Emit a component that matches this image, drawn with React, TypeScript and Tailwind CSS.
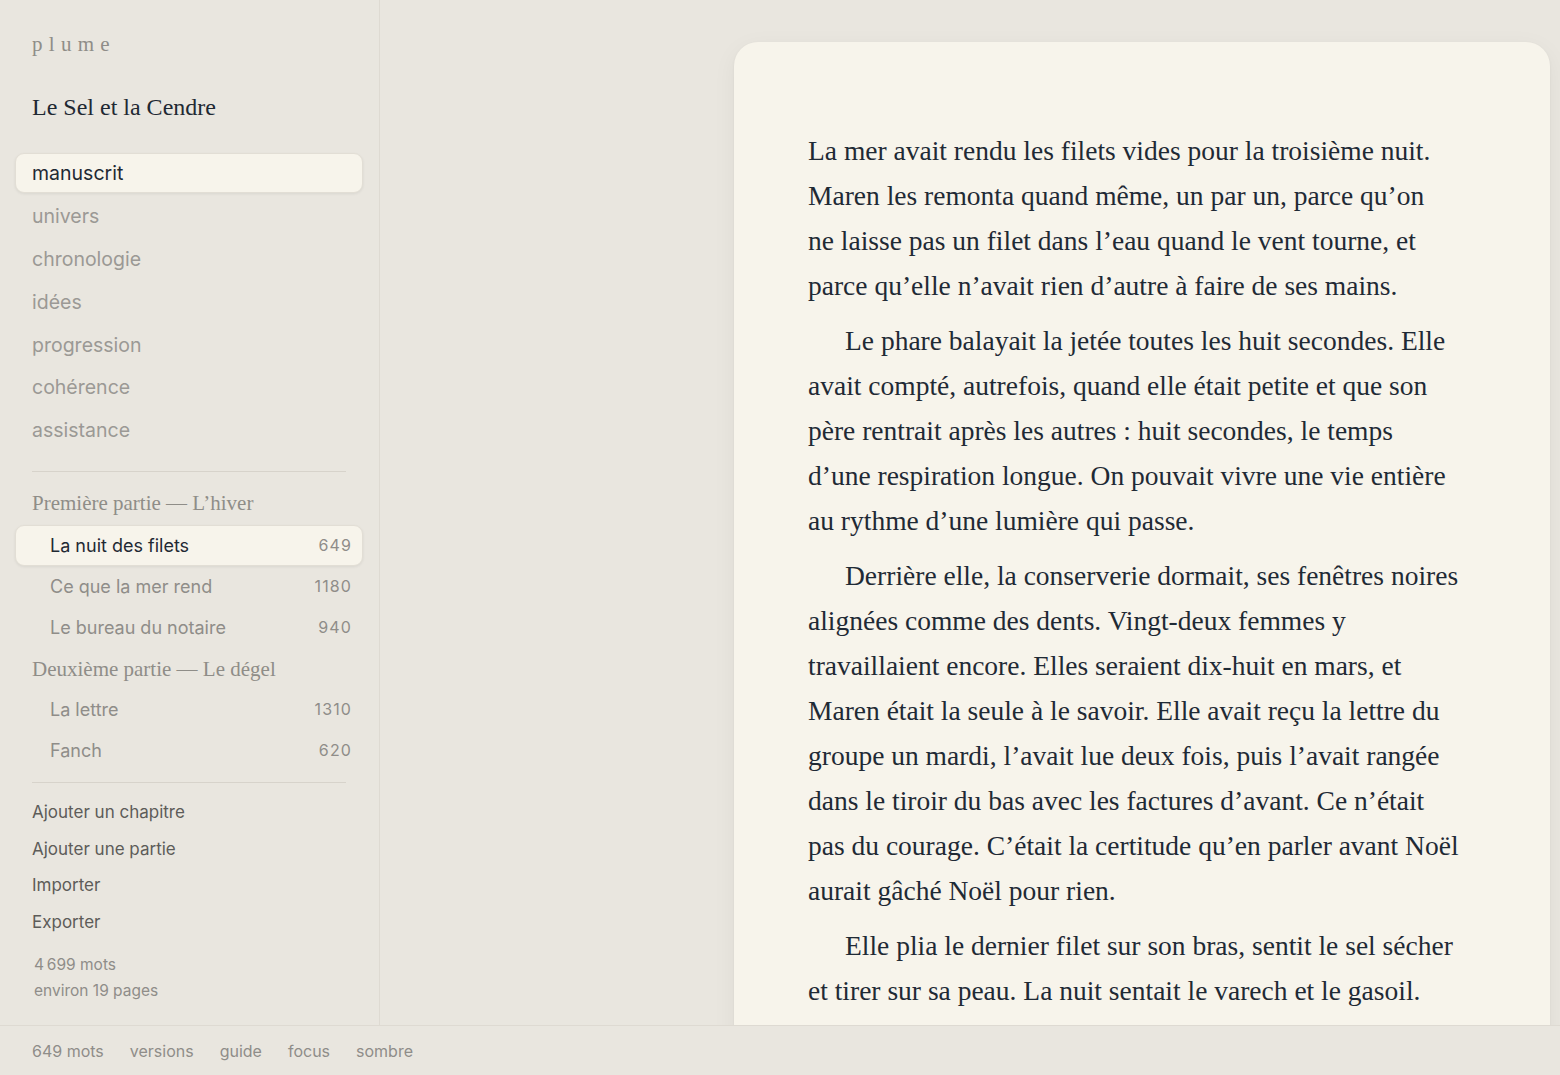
import React from 'react';

const sans = "font-['Inter','Liberation_Sans',sans-serif]";
const serif = "font-['Liberation_Serif','DejaVu_Serif',serif]";

const navItems = ['manuscrit', 'univers', 'chronologie', 'idées', 'progression', 'cohérence', 'assistance'];

const parts = [
  {
    title: 'Première partie — L’hiver',
    chapters: [
      { name: 'La nuit des filets', words: 649, active: true },
      { name: 'Ce que la mer rend', words: 1180 },
      { name: 'Le bureau du notaire', words: 940 },
    ],
  },
  {
    title: 'Deuxième partie — Le dégel',
    chapters: [
      { name: 'La lettre', words: 1310 },
      { name: 'Fanch', words: 620 },
    ],
  },
];

const paragraphs = [
  [
    'La mer avait rendu les filets vides pour la troisième nuit.',
    'Maren les remonta quand même, un par un, parce qu’on',
    'ne laisse pas un filet dans l’eau quand le vent tourne, et',
    'parce qu’elle n’avait rien d’autre à faire de ses mains.',
  ],
  [
    'Le phare balayait la jetée toutes les huit secondes. Elle',
    'avait compté, autrefois, quand elle était petite et que son',
    'père rentrait après les autres\u00a0: huit secondes, le temps',
    'd’une respiration longue. On pouvait vivre une vie entière',
    'au rythme d’une lumière qui passe.',
  ],
  [
    'Derrière elle, la conserverie dormait, ses fenêtres noires',
    'alignées comme des dents. Vingt-deux femmes y',
    'travaillaient encore. Elles seraient dix-huit en mars, et',
    'Maren était la seule à le savoir. Elle avait reçu la lettre du',
    'groupe un mardi, l’avait lue deux fois, puis l’avait rangée',
    'dans le tiroir du bas avec les factures d’avant. Ce n’était',
    'pas du courage. C’était la certitude qu’en parler avant Noël',
    'aurait gâché Noël pour rien.',
  ],
  [
    'Elle plia le dernier filet sur son bras, sentit le sel sécher',
    'et tirer sur sa peau. La nuit sentait le varech et le gasoil.',
    'Quelque part derrière la digue, un chien aboya une fois.',
  ],
];

function Sidebar() {
  return (
    <aside className={`w-[380px] shrink-0 border-r border-[#dedad2] flex flex-col pt-[30px] pl-[15px] pr-[16px] ${sans}`}>
      <div className={`pl-[17px] text-[21px] leading-[28px] tracking-[0.3em] text-[#8f8d88] ${serif}`}>plume</div>
      <div className={`mt-[34px] pl-[17px] text-[24px] leading-[30px] text-[#1f2933] ${serif}`}>Le Sel et la Cendre</div>

      {/* Navigation */}
      <nav className="mt-[31px] flex flex-col gap-[2.8px]">
        {navItems.map((item, i) => (
          <div
            key={item}
            className={`h-[40px] flex items-center pl-[16px] pt-[2px] rounded-[9px] border text-[19.5px] ${
              i === 0
                ? 'bg-[#f7f4eb] text-[#1f2933] border-[#e2ded5] shadow-[0_1px_3px_rgba(0,0,0,0.07)]'
                : 'border-transparent text-[#9b9995]'
            }`}
          >
            {item}
          </div>
        ))}
      </nav>

      <div className="mt-[21px] mx-[17px] border-t border-[#d7d3cb]" />

      {/* Chapters */}
      {parts.map((part, pi) => (
        <div key={part.title} className={pi === 0 ? 'mt-[16px]' : 'mt-[6px]'}>
          <div className={`pl-[17px] text-[21px] leading-[30px] text-[#8f8d88] ${serif}`}>{part.title}</div>
          <div className={pi === 0 ? 'mt-[7px]' : 'mt-[5px]'}>
            {part.chapters.map((ch) => (
              <div
                key={ch.name}
                className={`h-[41px] flex items-center justify-between pl-[34px] pr-[10px] rounded-[9px] border ${
                  ch.active
                    ? 'bg-[#f7f4eb] border-[#e2ded5] shadow-[0_1px_3px_rgba(0,0,0,0.07)]'
                    : 'border-transparent'
                }`}
              >
                <span className={`text-[18px] ${ch.active ? 'text-[#1f2933]' : 'text-[#8f8d89]'}`}>{ch.name}</span>
                <span className="text-[16px] text-[#8f8d89] tracking-[0.07em]">{ch.words}</span>
              </div>
            ))}
          </div>
        </div>
      ))}

      <div className="mt-[11px] mx-[17px] border-t border-[#d7d3cb]" />

      {/* Actions */}
      <div className="mt-[12px] flex flex-col">
        {['Ajouter un chapitre', 'Ajouter une partie', 'Importer', 'Exporter'].map((a) => (
          <div key={a} className="h-[36.5px] flex items-center pl-[17px] text-[17px] text-[#5d5c59]">
            {a}
          </div>
        ))}
      </div>

      <div className="mt-[11px] pl-[19px] text-[15.5px] leading-[26px] text-[#8f8d89]">
        <div>4{'\u202f'}699 mots</div>
        <div>environ 19 pages</div>
      </div>
    </aside>
  );
}

function Paper() {
  return (
    <div className="w-[816px] rounded-t-[24px] bg-[#f7f4eb] shadow-[0_1px_3px_rgba(0,0,0,0.05),0_6px_24px_rgba(0,0,0,0.05)] pt-[86px] pl-[74px] pr-[20px]">
      <div className={`text-[27.5px] leading-[45px] text-[#1f2a35] ${serif}`}>
        {paragraphs.map((lines, pi) => (
          <p key={pi} className={pi === 0 ? '' : 'mt-[10px]'}>
            {lines.map((line, li) => (
              <span key={li} className={`block whitespace-nowrap ${pi > 0 && li === 0 ? 'pl-[37px]' : ''}`}>
                {line}
              </span>
            ))}
          </p>
        ))}
      </div>
    </div>
  );
}

export default function App() {
  return (
    <div className="h-[1075px] w-full flex flex-col bg-[#e9e6df] overflow-hidden">
      <div className="flex-1 min-h-0 flex">
        <Sidebar />
        <main className="flex-1 min-w-0 overflow-hidden flex justify-end items-start pt-[42px] pr-[10px]">
          <Paper />
        </main>
      </div>
      <footer className={`h-[50px] shrink-0 border-t border-[#dedad2] flex items-center gap-[26px] px-[32px] text-[16px] text-[#8f8d89] ${sans}`}>
        <span>649 mots</span>
        <span>versions</span>
        <span>guide</span>
        <span>focus</span>
        <span>sombre</span>
      </footer>
    </div>
  );
}
